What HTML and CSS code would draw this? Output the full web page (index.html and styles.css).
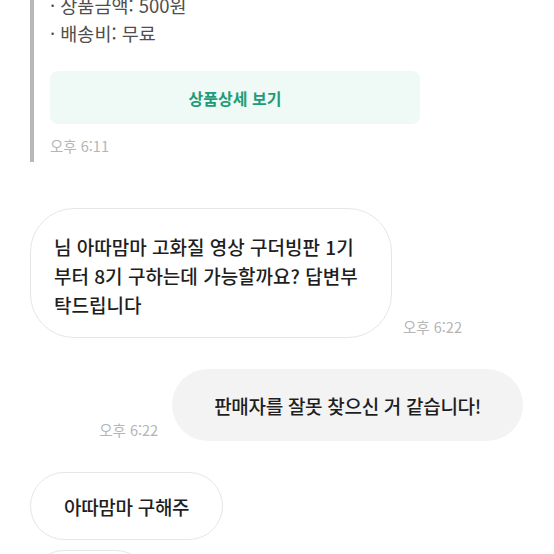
FILE: index.html
```html
<!DOCTYPE html>
<html lang="ko">
<head>
  <meta charset="UTF-8">
  <meta name="viewport" content="width=device-width, initial-scale=1.0">
  <title>채팅</title>
  <link rel="stylesheet" href="styles.css">
</head>
<body>
  <div class="chat">
    <div class="order-card">
      <ul class="order-info">
        <li>· 상품금액: 500원</li>
        <li>· 배송비: 무료</li>
      </ul>
      <button class="detail-btn">상품상세 보기</button>
      <div class="time">오후 6:11</div>
    </div>

    <div class="row row-in first">
      <div class="bubble bubble-in wide">님 아따맘마 고화질 영상 구더빙판 1기부터 8기 구하는데 가능할까요? 답변부탁드립니다</div>
      <div class="time">오후 6:22</div>
    </div>

    <div class="row row-out">
      <div class="time">오후 6:22</div>
      <div class="bubble bubble-out">판매자를 잘못 찾으신 거 같습니다!</div>
    </div>

    <div class="row row-in">
      <div class="bubble bubble-in short">아따맘마 구해주</div>
    </div>

    <div class="row row-in next">
      <div class="bubble bubble-in short">제발요</div>
    </div>
  </div>
</body>
</html>
```

FILE: styles.css
```css
body {
  margin: 0;
  background: #fff;
  font-family: "Noto Sans CJK KR", "Noto Sans", sans-serif;
  color: #1e1e1e;
  overflow: hidden;
}
.chat {
  padding: 0 31px 0 30px;
}
.order-card {
  margin-top: -9px;
  border-left: 4px solid #b8b8b8;
  padding: 0 0 6px 16px;
}
.order-info {
  list-style: none;
  margin: 0;
  padding: 0;
  font-size: 18.5px;
  line-height: 28px;
  color: #4e4e4e;
}
.detail-btn {
  display: block;
  width: 370px;
  height: 53px;
  margin-top: 24px;
  border: none;
  border-radius: 8px;
  background: #effaf7;
  color: #1f9b78;
  font-family: inherit;
  font-size: 16px;
  font-weight: bold;
}
.time {
  font-size: 14.5px;
  line-height: 20px;
  color: #b5b5b5;
}
.order-card .time {
  margin-top: 12px;
}
.row {
  display: flex;
  align-items: flex-end;
  gap: 11px;
  margin-top: 31px;
}
.row .time {
  margin-bottom: 1px;
}
.row.first {
  margin-top: 46px;
}
.row.next {
  margin-top: 10px;
}
.row-out {
  justify-content: flex-end;
  gap: 14px;
}
.bubble {
  font-size: 19px;
  font-weight: 500;
  line-height: 29px;
  letter-spacing: -0.3px;
  border-radius: 36px;
  text-align: center;
}
.bubble-in {
  background: #fff;
  border: 1px solid #e6e6e6;
}
.bubble-out {
  background: #f3f3f3;
  padding: 22px 42px 21px 42px;
}
.short {
  padding: 19px 33px 18px 33px;
}
.wide {
  width: 308px;
  border-radius: 44px;
  padding: 23px 29px 18px 23px;
  text-align: left;
  letter-spacing: 0;
}
```
